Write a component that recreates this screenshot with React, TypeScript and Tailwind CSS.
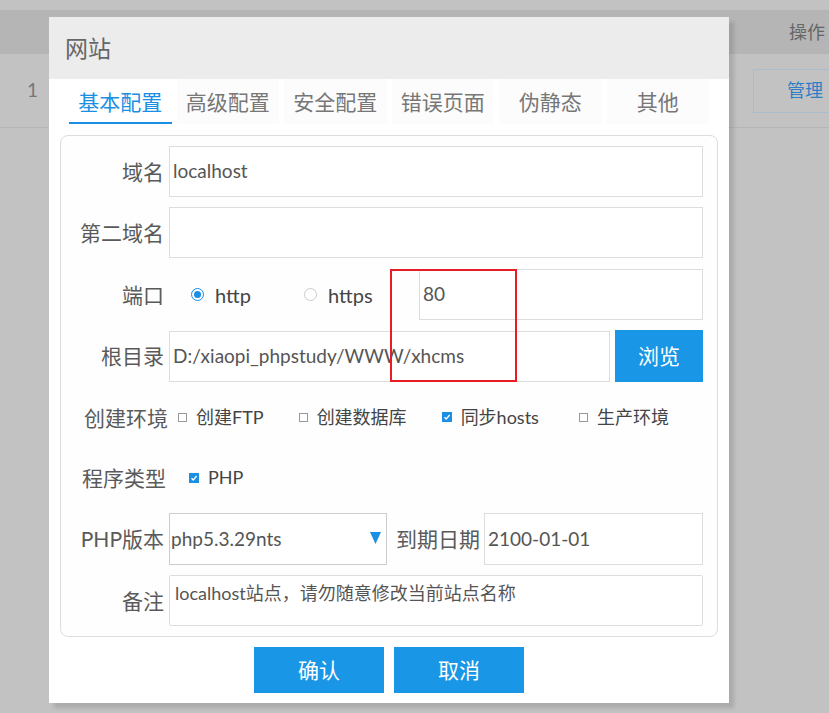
import { useState } from 'react';

const font = { fontFamily: 'Lato, "Noto Sans CJK SC", sans-serif' };

const tabs = ['基本配置', '高级配置', '安全配置', '错误页面', '伪静态', '其他'];

function Label({ text }: { text: string }) {
  return (
    <div className="w-[108px] shrink-0 pr-[5px] text-right text-[21px] text-[#5a5a5a]">{text}</div>
  );
}

function Box({ value }: { value?: string }) {
  return (
    <div className="flex h-[51px] flex-1 items-center border border-[#ddd] bg-white pl-[3px] text-[19px] text-[#555]">
      {value}
    </div>
  );
}

function Check({ checked, label }: { checked?: boolean; label: string }) {
  return (
    <div className="flex items-center">
      {checked ? (
        <span className="flex h-[10px] w-[10px] items-center justify-center bg-[#1a8fe3]">
          <svg width="8" height="8" viewBox="0 0 8 8">
            <path d="M1.5 4.2 L3.3 6 L6.6 2" stroke="white" strokeWidth="1.3" fill="none" />
          </svg>
        </span>
      ) : (
        <span className="h-[9px] w-[9px] border border-[#999] bg-white" />
      )}
      <span className="ml-[9px] text-[18px] text-[#444]">{label}</span>
    </div>
  );
}

function Radio({ checked, label }: { checked?: boolean; label: string }) {
  return (
    <div className="flex items-center">
      <span
        className={
          checked
            ? 'flex h-[13px] w-[13px] items-center justify-center rounded-full border border-[#1a8fe3]'
            : 'h-[13px] w-[13px] rounded-full border border-[#ccc]'
        }
      >
        {checked && <span className="h-[7px] w-[7px] rounded-full bg-[#1a8fe3]" />}
      </span>
      <span className="ml-[11px] text-[20px] text-[#444]">{label}</span>
    </div>
  );
}

export default function App() {
  const [active, setActive] = useState(0);

  return (
    <div className="relative h-[713px] w-[829px] overflow-hidden bg-[#c2c2c2]" style={font}>
      {/* page behind the overlay */}
      <div className="h-[10px]" />
      <div className="flex h-[44px] items-center justify-end bg-[#b5b5b5] pr-[4px] text-[18px] text-[#666]">
        操作
      </div>
      <div className="flex h-[74px] items-center border-b border-[#b6b6b6]">
        <span className="ml-[27px] text-[19px] text-[#777]">1</span>
        <div className="ml-auto mr-[-24px] flex h-[44px] w-[100px] items-center border border-[#a9bccb] pl-[33px] text-[18px] text-[#2f7fc4]">
          管理
        </div>
      </div>

      {/* dialog */}
      <div className="absolute left-[49px] top-[17px] flex h-[686px] w-[680px] flex-col bg-white shadow-[5px_5px_4px_rgba(0,0,0,0.12)]">
        <div className="flex h-[62px] items-center bg-[#ececec] pl-[16px] text-[23px] text-[#666]">网站</div>

        <div className="flex h-[45px] gap-[5px] px-[20px]">
          {tabs.map((t, i) => (
            <div
              key={t}
              onClick={() => setActive(i)}
              className={
                i === active
                  ? 'flex w-[103px] items-center justify-center border-b-2 border-[#1a8fe3] pt-[2px] text-[21px] text-[#1a8fe3]'
                  : 'flex w-[103px] items-center justify-center bg-[#fcfcfc] text-[21px] text-[#777]'
              }
            >
              {t}
            </div>
          ))}
        </div>

        <div className="mx-[11px] mt-[11px] flex h-[502px] flex-col gap-[10px] rounded-[8px] border border-[#ddd] bg-[#fefefe] pb-[10px] pr-[14px] pt-[10px]">
          <div className="flex items-center">
            <Label text="域名" />
            <Box value="localhost" />
          </div>
          <div className="flex items-center">
            <Label text="第二域名" />
            <Box />
          </div>
          <div className="mt-[1px] flex items-center">
            <Label text="端口" />
            <div className="ml-[22px] w-[113px]">
              <Radio checked label="http" />
            </div>
            <div className="w-[115px]">
              <Radio label="https" />
            </div>
            <Box value="80" />
          </div>
          <div className="flex items-center">
            <Label text="根目录" />
            <Box value="D:/xiaopi_phpstudy/WWW/xhcms" />
            <div className="ml-[5px] flex h-[52px] w-[88px] items-center justify-center bg-[#1a96e6] text-[21px] text-white">
              浏览
            </div>
          </div>
          <div className="flex h-[51px] items-center">
            <div className="w-[107px] shrink-0 text-right text-[21px] text-[#5a5a5a]">创建环境</div>
            <div className="ml-[10px] flex items-center gap-[35px]">
              <Check label="创建FTP" />
              <Check label="创建数据库" />
              <Check checked label="同步hosts" />
              <div className="ml-[5px]">
                <Check label="生产环境" />
              </div>
            </div>
          </div>
          <div className="flex h-[51px] items-center">
            <div className="w-[105px] shrink-0 text-right text-[21px] text-[#5a5a5a]">程序类型</div>
            <div className="ml-[23px]">
              <Check checked label="PHP" />
            </div>
          </div>
          <div className="flex items-center">
            <Label text="PHP版本" />
            <div className="relative flex h-[52px] w-[218px] items-center border border-[#ccc] bg-white pl-[1px] text-[19px] text-[#555]">
              php5.3.29nts
              <svg className="absolute right-[5px] top-[18px]" width="11" height="12" viewBox="0 0 11 12">
                <path d="M0 0 H11 L5.5 12 Z" fill="#1a8fe3" />
              </svg>
            </div>
            <div className="ml-[9px] w-[88px] text-[21px] text-[#5a5a5a]">到期日期</div>
            <div className="flex h-[52px] flex-1 items-center border border-[#ddd] bg-white pl-[3px] text-[19px] text-[#555]">
              2100-01-01
            </div>
          </div>
          <div className="flex items-center">
            <Label text="备注" />
            <div className="h-[51px] flex-1 rounded-[2px] border border-[#ddd] bg-white pl-[5px] pt-[5px] text-[18px] leading-[24px] text-[#555]">
              localhost站点，请勿随意修改当前站点名称
            </div>
          </div>
        </div>

        <div className="mt-[10px] flex justify-center gap-[10px]">
          <div className="flex h-[46px] w-[130px] items-center justify-center bg-[#1a96e6] text-[21px] text-white">确认</div>
          <div className="flex h-[46px] w-[130px] items-center justify-center bg-[#1a96e6] text-[21px] text-white">取消</div>
        </div>

        {/* red annotation box */}
        <div className="absolute left-[341px] top-[252px] h-[113px] w-[127px] border-2 border-[#e81c24]" />
      </div>
    </div>
  );
}
